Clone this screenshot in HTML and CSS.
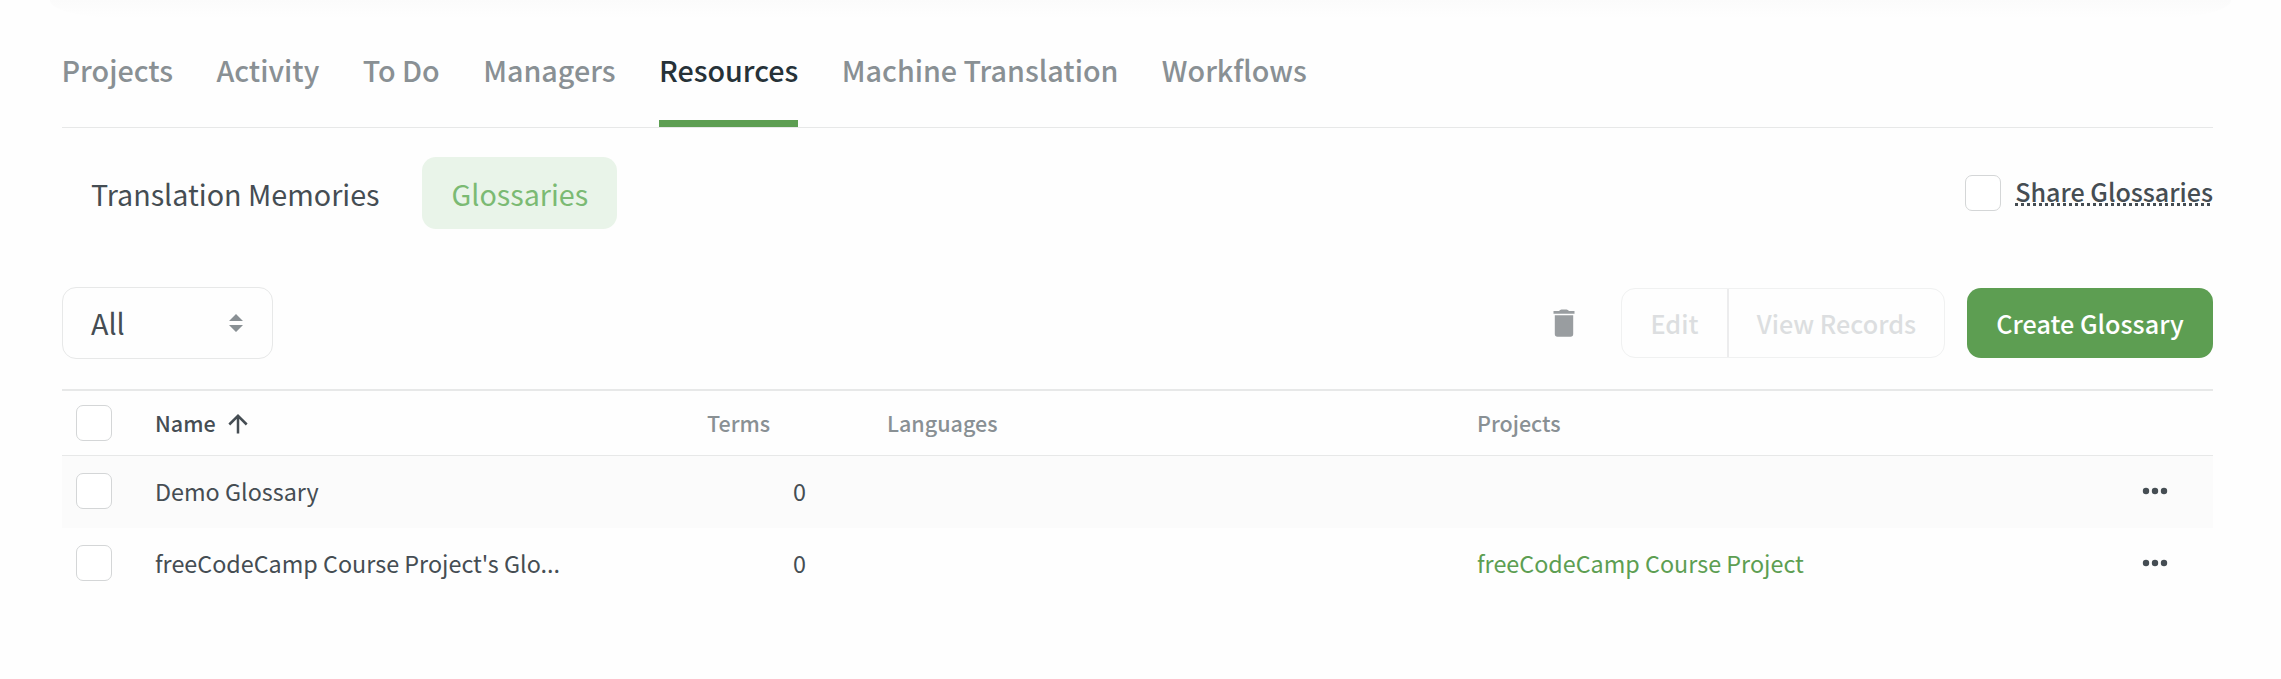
FILE: index.html
```
<!DOCTYPE html>
<html lang="en">
<head>
<meta charset="utf-8">
<title>Resources – Glossaries</title>
<link rel="stylesheet" href="styles.css">
</head>
<body>
<div class="top-shadow"></div>
<main class="page">
  <nav class="tabs">
    <a class="tab">Projects</a>
    <a class="tab">Activity</a>
    <a class="tab">To Do</a>
    <a class="tab">Managers</a>
    <a class="tab tab-active">Resources</a>
    <a class="tab">Machine Translation</a>
    <a class="tab">Workflows</a>
  </nav>
  <section class="subnav">
    <div class="pills">
      <a class="pill">Translation Memories</a>
      <a class="pill pill-active">Glossaries</a>
    </div>
    <label class="share"><span class="checkbox"></span><span class="share-text">Share Glossaries</span></label>
  </section>
  <section class="toolbar">
    <div class="select"><span>All</span>
      <svg class="sort" width="14" height="18" viewBox="0 0 14 18"><path d="M7 0l7 7H0zM0 11h14l-7 7z" fill="#899094"/></svg>
    </div>
    <div class="actions">
      <svg class="trash" width="22" height="28" viewBox="0 0 22 28"><path d="M.5 2H6q1-1.500 2.500-1.500h5Q15 .5 16 2h5.500v2.800H.5zM1.800 6.300h18.400V25q0 2.700-2.700 2.700h-13Q1.800 27.700 1.800 25z" fill="#999da0"/></svg>
      <div class="group"><span class="btn edit">Edit</span><span class="btn records">View Records</span></div>
      <span class="create">Create Glossary</span>
    </div>
  </section>
  <section class="table">
    <div class="row head">
      <span class="checkbox"></span>
      <span class="label name">Name<svg class="arrow" width="20" height="20" viewBox="0 0 20 20"><path d="M10 19.500V2M1.300 10.500L10 1.800l8.700 8.700" fill="none" stroke="#454d53" stroke-width="2.500"/></svg></span>
      <span class="label">Terms</span><span class="label">Languages</span><span class="label">Projects</span><span></span>
    </div>
    <div class="row odd">
      <span class="checkbox"></span><span>Demo Glossary</span><span class="count">0</span><span></span><span></span>
      <svg class="dots" width="26" height="8" viewBox="0 0 26 8"><circle cx="4" cy="4" r="3.200"/><circle cx="13" cy="4" r="3.200"/><circle cx="22" cy="4" r="3.200"/></svg>
    </div>
    <div class="row">
      <span class="checkbox"></span><span>freeCodeCamp Course Project's Glo...</span><span class="count">0</span><span></span><a class="link">freeCodeCamp Course Project</a>
      <svg class="dots" width="26" height="8" viewBox="0 0 26 8"><circle cx="4" cy="4" r="3.200"/><circle cx="13" cy="4" r="3.200"/><circle cx="22" cy="4" r="3.200"/></svg>
    </div>
  </section>
</main>
</body>
</html>
```
FILE: styles.css
```
* { box-sizing: border-box; }
body {
  margin: 0;
  height: 679px;
  overflow: hidden;
  background: #fefefe;
  color: #454d53;
  font-family: "Noto Sans CJK SC", "Noto Sans", sans-serif;
  font-size: 28.7px;
  white-space: nowrap;
}
.top-shadow {
  height: 18px;
  margin: 0 50px;
  border-radius: 0 0 70px 70px / 0 0 18px 18px;
  background: linear-gradient(#fbfbfb, #fefefe);
}
.page { margin: 0 68px 0 62px; }
.tabs {
  display: flex;
  gap: 43.4px;
  height: 110px;
  border-bottom: 1px solid #e7e8e8;
}
.tab {
  height: 109px;
  line-height: 104px;
  font-weight: 500;
  color: #899094;
}
.tab:first-child { margin-left: -0.5px; }
.tab-active {
  color: #263238;
  border-bottom: 7px solid #5d9e52;
}
.subnav {
  display: flex;
  justify-content: space-between;
  height: 159px;
  padding-top: 29px;
}
.pills { display: flex; gap: 14px; height: 72px; }
.pill {
  padding: 0 29px;
  border-radius: 14px;
  line-height: 74px;
}
.pill-active { background: #e9f4e9; color: #7bba73; }
.checkbox {
  display: block;
  width: 36px;
  height: 36px;
  border: 1px solid #d4d6d7;
  border-radius: 7px;
  background: #fff;
}
.share {
  display: flex;
  gap: 14px;
  height: 36px;
  margin-top: 18px;
  font-size: 25.1px;
  font-weight: 500;
  line-height: 32px;
}
.share-text {
  height: 31px;
  background: repeating-linear-gradient(90deg, #454d53 0 3px, transparent 3px 6px) 0 28px / 100% 3px no-repeat;
}
.toolbar {
  display: flex;
  justify-content: space-between;
  height: 102px;
}
.select {
  display: flex;
  align-items: center;
  justify-content: space-between;
  width: 211px;
  height: 72px;
  padding: 0 29px 0 28px;
  border: 1px solid #e7e8e8;
  border-radius: 14px;
  line-height: 72px;
}
.actions {
  display: flex;
  align-items: center;
  height: 70px;
  margin-top: 1px;
  font-size: 25.2px;
  font-weight: 500;
  line-height: 69px;
}
.trash { margin-right: 46px; }
.group {
  display: flex;
  width: 324px;
  height: 70px;
  margin-right: 22px;
  border: 1px solid #f0f1f1;
  border-radius: 14px;
  color: #dcdee0;
}
.btn { text-align: center; }
.edit { width: 107px; border-right: 2px solid #ececed; }
.records { flex: 1; }
.create {
  width: 246px;
  height: 70px;
  border-radius: 14px;
  background: #5d9e52;
  color: #fff;
  line-height: 71px;
  text-align: center;
}
.table { border-top: 2px solid #e7e8e8; font-size: 23.35px; }
.row {
  display: grid;
  grid-template-columns: 79px 552px 180px 590px 665px 26px;
  align-items: center;
  height: 72px;
  padding: 0 0 2px 14px;
}
.head {
  height: 65px;
  padding-bottom: 0;
  border-bottom: 1px solid #e7e8e8;
  color: #899094;
  font-size: 21.5px;
  font-weight: 500;
}
.label { padding-bottom: 2px; }
.name { display: flex; align-items: center; gap: 12px; color: #454d53; }
.arrow { margin-top: 4px; }
.odd { background: #fbfbfb; }
.count { padding-left: 86px; }
.link { color: #5d9e52; }
.dots { fill: #454d53; }
```
